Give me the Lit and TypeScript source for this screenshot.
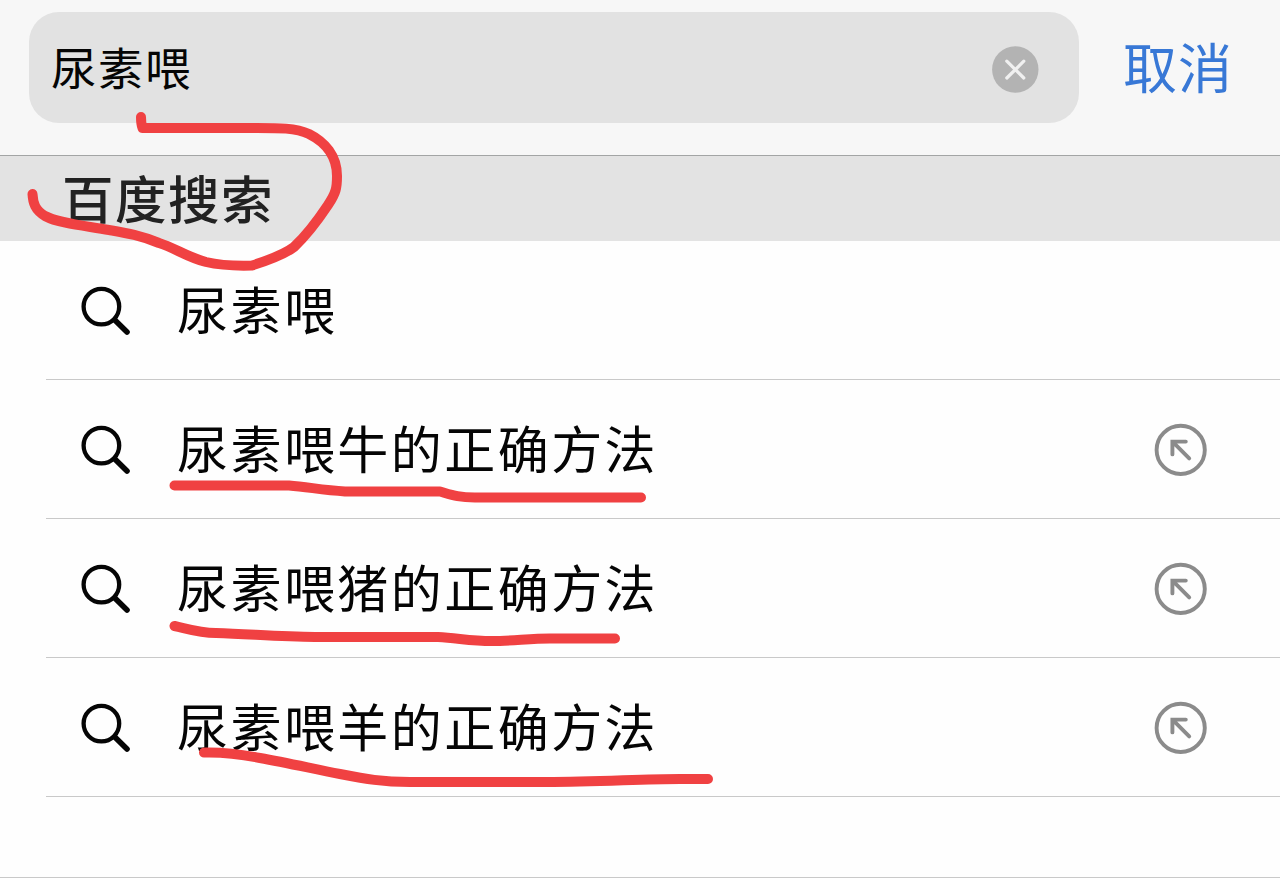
import { LitElement, css, html, svg } from "lit";
import { customElement, property, state } from "lit/decorators.js";

@customElement("suggestion-row")
export class SuggestionRow extends LitElement {
  @property() text = "";
  @property({ type: Boolean }) fill = false;

  render() {
    return html`
      <div class="row">
        <svg class="search" width="52" height="52" viewBox="0 0 52 52">
          <circle cx="22.4" cy="21.6" r="17.8" />
          <path class="handle" d="M35.8 35L48 47" />
        </svg>
        <span class="text">${this.text}</span>
        ${this.fill
          ? html`<svg class="arrow" width="54" height="54" viewBox="0 0 54 54">
              <circle cx="26.7" cy="26.9" r="24.1" />
              <path d="M18.4 31.4V18.6H31.8M19 19.2L35.2 35.4" />
            </svg>`
          : ""}
      </div>
    `;
  }

  static styles = css`
    :host {
      display: block;
      padding-left: 46px;
    }
    .row {
      display: flex;
      align-items: center;
      box-sizing: border-box;
      height: 139px;
      padding: 2px 72px 0 33px;
      border-bottom: 1px solid #c9c9c9;
    }
    svg {
      flex: none;
      fill: none;
      stroke-linecap: round;
    }
    .search {
      stroke: #050505;
      stroke-width: 4.3;
    }
    .handle {
      stroke-width: 5.6;
    }
    .text {
      flex: 1;
      margin-left: 46px;
      padding-bottom: 7px;
      font-size: 51px;
      line-height: 70px;
      letter-spacing: 2.45px;
      white-space: nowrap;
    }
    .arrow {
      stroke: #8b8b8b;
      stroke-width: 3.9;
    }
  `;
}

@customElement("app-root")
export class AppRoot extends LitElement {
  @state() query = "尿素喂";
  @state() items = [
    { text: "尿素喂", fill: false },
    { text: "尿素喂牛的正确方法", fill: true },
    { text: "尿素喂猪的正确方法", fill: true },
    { text: "尿素喂羊的正确方法", fill: true },
  ];

  // hand drawn marker strokes, in page coordinates
  strokes = [
    "M141 117Q141 124 142.5 128H240C276 128 294 127 309 134C325 142 337 156 337 176C337 188 336 193 328 205C318 220 309 233 294 247C285 254 266 261 252 265.5C235 266 219 265 206 262C187 257 175 248 159 243C139 235 126 233 109 230C88 226 60 224 45 216C35 210 33 203 32.5 194",
    "M174.5 485.5H289C308 487 322 490 345 491.5H440C452 495 458 497.5 475 497.5H641",
    "M174.5 626C188 629 199 633 216 633C250 634 280 637 315 637H438C458 638 470 641 492 641C512 641 530 638.5 550 638.5H615",
    "M204 752.5C222 752 240 754 260 758C288 763 314 769 340 774C366 779 382 782 410 782H546C600 782 640 779 680 779H708",
  ];

  render() {
    return html`
      <header>
        <div class="field">
          <span class="query">${this.query}</span>
          <svg class="clear" width="48" height="48" viewBox="0 0 48 48">
            <circle cx="24.3" cy="24.5" r="23.2" />
            <path d="M15.8 16.2L32.8 33M32.8 16.2L15.8 33" />
          </svg>
        </div>
        <span class="cancel">取消</span>
      </header>
      <div class="section">百度搜索</div>
      <main>
        ${this.items.map(
          (i) =>
            html`<suggestion-row .text=${i.text} .fill=${i.fill}></suggestion-row>`
        )}
      </main>
      <svg class="marker" width="1280" height="878" viewBox="0 0 1280 878">
        ${this.strokes.map((d) => svg`<path d=${d} />`)}
      </svg>
    `;
  }

  static styles = css`
    :host {
      display: flex;
      flex-direction: column;
      position: relative;
      box-sizing: border-box;
      width: 1280px;
      height: 878px;
      overflow: hidden;
      background: #fefefe;
      border-bottom: 1px solid #c9c9c9;
      color: #050505;
      font-family: "Noto Sans CJK SC", sans-serif;
    }
    header {
      display: flex;
      align-items: flex-start;
      box-sizing: border-box;
      height: 156px;
      padding: 12px 0 0 29px;
      background: #f7f7f7;
      border-bottom: 1px solid #a3a5a5;
    }
    .field {
      display: flex;
      align-items: center;
      justify-content: space-between;
      box-sizing: border-box;
      width: 1050px;
      height: 111px;
      padding: 3px 40px 0 22px;
      border-radius: 30px;
      background: #e2e2e2;
    }
    .query {
      padding-bottom: 6px;
      font-size: 45.5px;
      line-height: 64px;
      letter-spacing: 1.5px;
    }
    .clear {
      fill: #b3b3b3;
    }
    .clear path {
      stroke: #f0f0f0;
      stroke-width: 3.2;
      stroke-linecap: round;
    }
    .cancel {
      margin: 15px 0 0 44px;
      font-size: 54px;
      line-height: 78px;
      letter-spacing: 1px;
      color: #3878d6;
    }
    .section {
      box-sizing: border-box;
      height: 85px;
      padding: 0 0 0 62px;
      background: #e3e3e3;
      color: #222;
      font-size: 51.5px;
      font-weight: 500;
      line-height: 81px;
      letter-spacing: 1.5px;
    }
    .marker {
      position: absolute;
      top: 0;
      left: 0;
      pointer-events: none;
      fill: none;
      stroke: #f04142;
      stroke-width: 10;
      stroke-linecap: round;
      stroke-linejoin: round;
    }
  `;
}
